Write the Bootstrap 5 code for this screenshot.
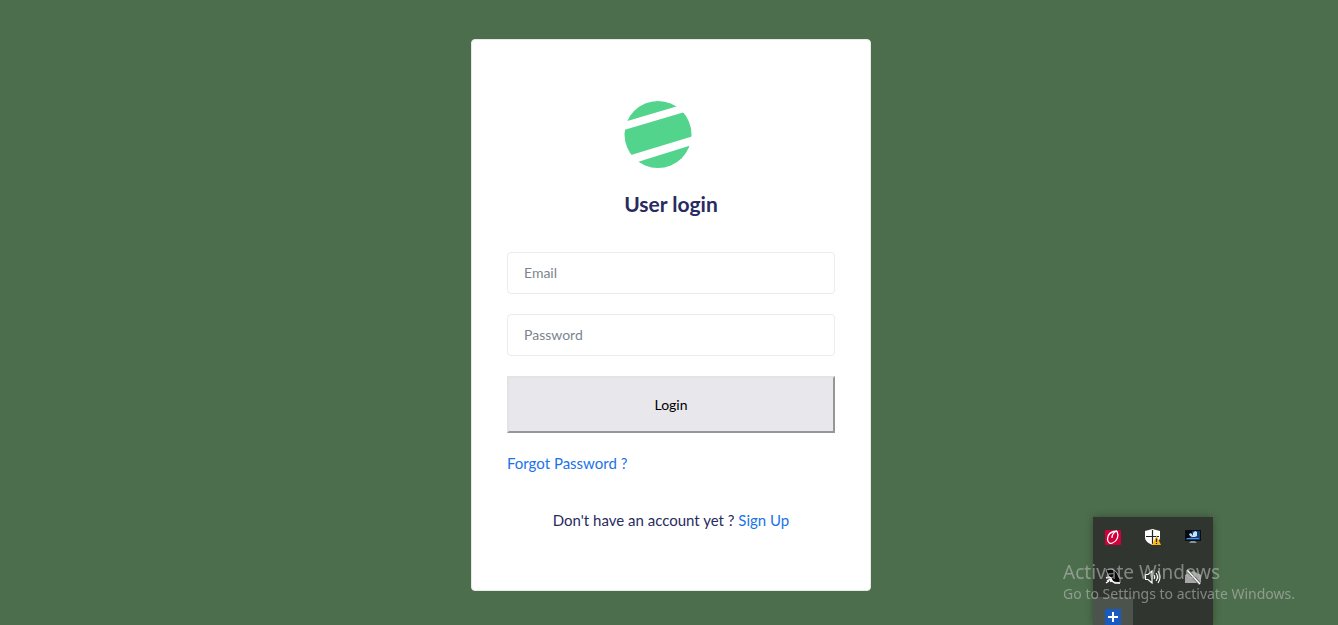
<!DOCTYPE html>
<html lang="en">
<head>
<meta charset="utf-8">
<meta name="viewport" content="width=device-width, initial-scale=1">
<title>User login</title>
<link href="https://cdn.jsdelivr.net/npm/bootstrap@5.3.0/dist/css/bootstrap.min.css" rel="stylesheet">
<style>
  body { background: #4d6e4d; color: #272b5f; font-family: Lato, sans-serif; font-size: 14px; line-height: 21px; }
  .login-page { padding-top: 39px; }
  .login-card { width: 100%; max-width: 400px; border: 1px solid #e4ebe4; border-radius: 4px; padding: 61px 35px 59px; }
  .login-title { font-size: 21px; line-height: 24px; font-weight: 700; margin: 23px 0 36px; }
  .login-card .form-control { height: 42px; padding: 0 16px 2px; font-size: 14px; border-color: #ebecf1; border-radius: 4px; }
  .login-card .form-control::placeholder { color: #7b858e; }
  .login-button { height: 57px; background: #e8e7ec; border: 2px solid; border-color: #e3e3e3 #969696 #969696 #e3e3e3; color: #000; }
  .fields { gap: 20px; }
  .note { font-size: 15px; }
  .login-card a { color: #1a73e8; }
  .signup { margin: 36px 0 0; }
  .desktop-tray { position: fixed; right: 125px; bottom: 0; width: 120px; height: 108px; background: #30362f; box-shadow: 0 0 8px rgba(0,0,0,.3); display: grid; grid-template-columns: repeat(3, 1fr); grid-auto-rows: 40px; overflow: hidden; }
  .tray-cell { display: flex; align-items: center; justify-content: center; }
  .tray-selected { background: #4c534c; }
  .activation { position: fixed; right: 43px; bottom: 21px; color: rgba(182,186,182,.62); font-family: "Noto Sans", sans-serif; }
  .activation-title { font-size: 19px; line-height: 24px; }
  .activation-text { font-size: 14px; line-height: 20px; }
</style>
</head>
<body>
<main class="login-page container-fluid d-flex justify-content-center ps-3 pb-4">
  <section class="login-card bg-white">
    <header class="text-center">
      <div class="d-inline-block text-start">
        <svg class="d-block" width="68" height="68" viewBox="0 0 68 68" role="img" aria-label="Logo">
          <defs><clipPath id="disc"><circle cx="34" cy="33.5" r="33.5"/></clipPath></defs>
          <g clip-path="url(#disc)" fill="#52d48c">
            <path d="M0 21 54 5V-4H0Z"/><path d="M0 29 59 11.500 70 14V35L7 54 0 52Z"/><path d="M12 61.500 68 44V70H12Z"/>
          </g>
        </svg>
        <h1 class="login-title">User login</h1>
      </div>
    </header>
    <form class="fields d-flex flex-column" onsubmit="return false">
      <input class="form-control" type="email" placeholder="Email" aria-label="Email">
      <input class="form-control" type="password" placeholder="Password" aria-label="Password">
      <button class="login-button w-100" type="submit">Login</button>
      <a class="note text-decoration-none align-self-start" href="#">Forgot Password ?</a>
    </form>
    <p class="signup note text-center">Don't have an account yet ? <a class="text-decoration-none" href="#">Sign Up</a></p>
  </section>
</main>

<aside class="desktop-tray" aria-label="Notification icons">
  <span class="tray-cell"><svg width="16" height="16" viewBox="0 0 16 16"><rect y="1" width="16" height="15" rx="1" fill="#d1003c"/><path d="M12 2C6 2.500 2.500 5.500 2.500 10c0 3.500 2.500 5 5 4C12.500 12 14 7 12 2M12 2C8 3.500 7 6 7 9" fill="none" stroke="#fff" stroke-width="1.300"/></svg></span>
  <span class="tray-cell"><svg width="16" height="16" viewBox="0 0 16 16"><path d="M7.500 0 15 2v6c0 4-3 6-7.500 8C3 14 0 12 0 8V2Z" fill="#fff"/><path d="M7.500 1v14M1 7.500h13" stroke="#222" stroke-width="1.200"/><path d="M11.500 6.500 16 16H7Z" fill="#fcb814"/><path d="M11.500 9.500v3.500m0 1v1" stroke="#222" stroke-width="1.200"/></svg></span>
  <span class="tray-cell"><svg width="16" height="16" viewBox="0 0 16 16"><rect y="1" width="16" height="11" fill="#080d16"/><path d="M1 2h14v9H1Z" fill="#173c70"/><path d="M1 2h6v5L4 9H1Z" fill="#05080e"/><path d="m4 5 2-1 2 3V4l2-2 2 1v4l-2 1H7L5 7Z" fill="#c5e6ff"/><path d="M2 9h12v1H2Z" fill="#4694db"/><path d="M6 12h4l2 2H4Z" fill="#8c9398"/></svg></span>
  <span class="tray-cell"><svg width="16" height="16" viewBox="0 0 16 16"><path d="M1 1C5-1 9 0 12 4l3 6v4l-6-1-5-5Z" fill="#080808" stroke="#bbb" stroke-width=".8"/><path d="m1 9 3-1 2 1 1 3 3 2h5M2 12l3-2 1 3m-5 1 3-2" fill="none" stroke="#fff" stroke-width="1.400"/></svg></span>
  <span class="tray-cell"><svg width="16" height="16" viewBox="0 0 16 16" fill="none" stroke="#fff" stroke-width="1.200"><path d="M.5 5.500H3L7 2v12l-4-3.500H.5ZM9 6q1.500 2 0 4m2-6q3 4 0 8m2-10q4 6 0 12"/></svg></span>
  <span class="tray-cell"><svg width="16" height="16" viewBox="0 0 16 16"><path d="M0 6 8 2l8 4v8H0Z" fill="#a5a7a5"/><path d="m0 7 8 4 8-4" fill="none" stroke="#959795"/><path d="m2 1 13 14" stroke="#686c68" stroke-width="3"/><path d="m2 1 13 14" stroke="#fff" stroke-width="1.200"/></svg></span>
  <span class="tray-cell tray-selected"><svg width="16" height="16" viewBox="0 0 16 16"><path fill="#185abd" d="M0 0h16v16H0Z"/><path d="M8 3v10M3 8h10" stroke="#fff" stroke-width="2"/></svg></span>
</aside>
<div class="activation">
  <div class="activation-title">Activate Windows</div>
  <div class="activation-text">Go to Settings to activate Windows.</div>
</div>
<script src="https://cdn.jsdelivr.net/npm/bootstrap@5.3.0/dist/js/bootstrap.bundle.min.js"></script>
</body>
</html>
